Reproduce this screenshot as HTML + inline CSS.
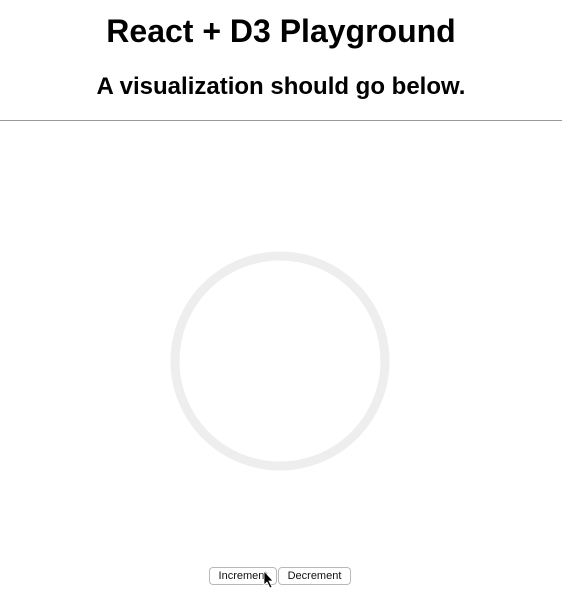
<!DOCTYPE html>
<html><head><style>
body{margin:0;width:562px;height:604px;background:#fff;font-family:"Liberation Sans",Arial,sans-serif;position:relative;overflow:hidden}
h1{position:absolute;top:13px;left:0;width:562px;text-align:center;margin:0;font-size:32px;font-weight:bold;color:#000}
h2{position:absolute;top:73px;left:0;width:562px;text-align:center;margin:0;font-size:24px;font-weight:bold;color:#000}
.hr{position:absolute;top:120px;left:0;width:562px;height:1px;background:#999}
.btn{position:absolute;top:567px;height:16px;border:1px solid #b8b8b8;border-radius:4px;background:#fff;font-size:11px;line-height:16px;text-align:center;color:#111}
</style></head><body>
<h1>React + D3 Playground</h1>
<h2>A visualization should go below.</h2>
<div class="hr"></div>
<svg style="position:absolute;left:0;top:0" width="562" height="604"><circle cx="280" cy="361" r="105" fill="none" stroke="#eeeeee" stroke-width="9"/></svg>
<div class="btn" style="left:209px;width:66px">Increment</div>
<div class="btn" style="left:278px;width:71px">Decrement</div>
<svg style="position:absolute;left:0;top:0" width="562" height="604"><path d="M264 571 L264 585 L267 582 L270 588 L272 587 L269 581 L273 581 Z" fill="#000" stroke="#fff" stroke-width="0.8"/></svg>
</body></html>
